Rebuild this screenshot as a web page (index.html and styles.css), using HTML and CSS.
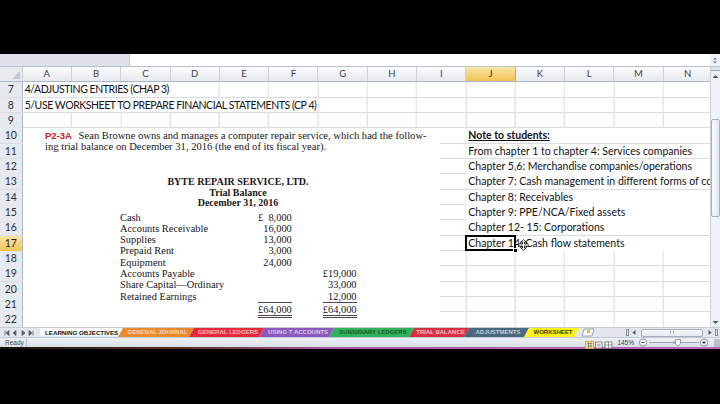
FILE: index.html
```html
<!DOCTYPE html>
<html lang="en">
<head>
    <meta charset="UTF-8">
    <meta name="viewport" content="width=device-width, initial-scale=1.0">
    <title>Trial balance - Excel</title>
    <link rel="stylesheet" href="styles.css">
</head>
<body>
    <div class="excel">
        <div class="formula-bar">
            <div class="name-box"></div>
            <div class="formula-input"></div>
            <div class="formula-arrows">
                <svg width="6" height="9" viewBox="0 0 6 9"><path d="M1 3.5 L3 1.5 L5 3.5Z M1 5.5 L3 7.5 L5 5.5Z" fill="#6d7886"/></svg>
            </div>
        </div>

        <div class="sheet">
            <div class="grid">
                <div class="col-head">
                    <div class="corner"><span class="corner-tri"></span></div>
                    <div>A</div><div>B</div><div>C</div><div>D</div><div>E</div>
                    <div>F</div><div>G</div><div>H</div><div>I</div>
                    <div class="active">J</div>
                    <div>K</div><div>L</div><div>M</div><div>N</div>
                </div>

                <div class="row"><div class="rh">7</div><div class="cell caps to-c">4/ADJUSTING ENTRIES (CHAP 3)</div></div>
                <div class="row"><div class="rh">8</div><div class="cell caps to-f">5/USE WORKSHEET TO PREPARE FINANCIAL STATEMENTS (CP 4)</div></div>
                <div class="row"><div class="rh">9</div></div>
                <div class="row"><div class="rh">10</div><div class="cell note"><b class="note-title">Note to students:</b></div></div>
                <div class="row"><div class="rh">11</div><div class="cell note">From chapter 1 to chapter 4: Services companies</div></div>
                <div class="row"><div class="rh">12</div><div class="cell note">Chapter 5,6: Merchandise companies/operations</div></div>
                <div class="row"><div class="rh">13</div><div class="cell note clip">Chapter 7: Cash management in different forms of co</div></div>
                <div class="row"><div class="rh">14</div><div class="cell note">Chapter 8: Receivables</div></div>
                <div class="row"><div class="rh">15</div><div class="cell note">Chapter 9: PPE/NCA/Fixed assets</div></div>
                <div class="row"><div class="rh">16</div><div class="cell note">Chapter 12- 15: Corporations</div></div>
                <div class="row"><div class="rh active">17</div>
                    <div class="cell note">Chapter 14: Cash flow statements
                        <span class="selection"><span class="fill-handle"></span></span>
                        <svg class="move-cursor" width="11" height="12" viewBox="0 0 11 12">
                            <path d="M5.5 0.5 L8 3 L6.5 3 L6.5 5 L8.5 5 L8.5 3.5 L10.5 6 L8.5 8.5 L8.5 7 L6.5 7 L6.5 9 L8 9 L5.5 11.5 L3 9 L4.5 9 L4.5 7 L2.5 7 L2.5 8.5 L0.5 6 L2.5 3.5 L2.5 5 L4.5 5 L4.5 3 L3 3Z" fill="#fff" stroke="#000" stroke-width="0.8"/>
                        </svg>
                    </div>
                </div>
                <div class="row"><div class="rh">18</div></div>
                <div class="row"><div class="rh">19</div></div>
                <div class="row"><div class="rh">20</div></div>
                <div class="row"><div class="rh">21</div></div>
                <div class="row"><div class="rh">22</div></div>

                <!-- pasted picture of the textbook problem -->
                <div class="picture">
                    <p class="problem"><span class="prob-no">P2-3A</span> Sean Browne owns and manages a computer repair service, which had the follow-<br>ing trial balance on December 31, 2016 (the end of its fiscal year).</p>
                    <div class="tb-title">
                        <div>BYTE REPAIR SERVICE, LTD.</div>
                        <div>Trial Balance</div>
                        <div>December 31, 2016</div>
                    </div>
                    <table class="tb">
                        <tr><td>Cash</td><td class="amt split"><span>£</span><span>8,000</span></td><td></td><td class="amt"></td></tr>
                        <tr><td>Accounts Receivable</td><td class="amt">16,000</td><td></td><td class="amt"></td></tr>
                        <tr><td>Supplies</td><td class="amt">13,000</td><td></td><td class="amt"></td></tr>
                        <tr><td>Prepaid Rent</td><td class="amt">3,000</td><td></td><td class="amt"></td></tr>
                        <tr><td>Equipment</td><td class="amt">24,000</td><td></td><td class="amt"></td></tr>
                        <tr><td>Accounts Payable</td><td class="amt"></td><td></td><td class="amt">£19,000</td></tr>
                        <tr><td>Share Capital—Ordinary</td><td class="amt"></td><td></td><td class="amt">33,000</td></tr>
                        <tr><td>Retained Earnings</td><td class="amt"></td><td></td><td class="amt">12,000</td></tr>
                        <tr class="total"><td></td><td class="amt">£64,000</td><td></td><td class="amt">£64,000</td></tr>
                    </table>
                </div>
            </div>

            <div class="vscroll">
                <div class="split-box"></div>
                <div class="sb-btn"><svg width="7" height="5" viewBox="0 0 7 5"><path d="M0.5 4 L3.5 1 L6.5 4Z" fill="#4d5866"/></svg></div>
                <div class="sb-track"><div class="sb-thumb"></div></div>
                <div class="sb-btn"><svg width="7" height="5" viewBox="0 0 7 5"><path d="M0.5 1 L3.5 4 L6.5 1Z" fill="#4d5866"/></svg></div>
            </div>
        </div>

        <div class="tab-bar">
            <div class="tab-nav">
                <svg width="36" height="6" viewBox="0 0 36 6">
                    <path d="M2 0.5 V5.5 M6 0.5 L3 3 L6 5.5Z M13 0.5 L10 3 L13 5.5Z M19 0.5 L22 3 L19 5.5Z M26 0.5 L29 3 L26 5.5Z M30 0.5 V5.5" fill="#55606d" stroke="#55606d" stroke-width="0.8"/>
                </svg>
            </div>
            <div class="tab active">LEARNING OBJECTIVES</div>
            <div class="tab orange">GENERAL JOURNAL</div>
            <div class="tab red">GENERAL LEDGERS</div>
            <div class="tab purple">USING T ACCOUNTS</div>
            <div class="tab green">SUBSIDIARY LEDGERS</div>
            <div class="tab red2">TRIAL BALANCE</div>
            <div class="tab slate">ADJUSTMENTS</div>
            <div class="tab yellow">WORKSHEET</div>
            <div class="tab-new">
                <svg width="14" height="9" viewBox="0 0 14 9"><path d="M3 1 H13 L11 8 H1Z" fill="#f4f6f9" stroke="#8a96a6" stroke-width="0.8"/><path d="M6 2 h3 v3 h-3z" fill="#e7b94a"/></svg>
            </div>
            <div class="hscroll">
                <span class="hs-split"></span>
                <svg width="6" height="7" viewBox="0 0 6 7"><path d="M4.5 1 L1.5 3.5 L4.5 6Z" fill="#4d5866"/></svg>
                <div class="hs-track"><div class="hs-thumb"><span class="hs-grip"></span></div></div>
                <svg width="6" height="7" viewBox="0 0 6 7"><path d="M1.5 1 L4.5 3.5 L1.5 6Z" fill="#4d5866"/></svg>
                <span class="hs-split"></span>
            </div>
        </div>

        <div class="status-bar">
            <div class="status-text">Ready</div>
            <div class="status-right">
                <div class="views">
                    <svg width="28" height="8" viewBox="0 0 28 8">
                        <rect x="0.5" y="0.5" width="8" height="7" fill="#fbe3a6" stroke="#e0a530"/>
                        <path d="M2 2.5 H7.5 M2 5 H7.5 M3.5 1.5 V7 M6 1.5 V7" stroke="#55606d" stroke-width="0.6"/>
                        <rect x="10.5" y="1" width="6.5" height="6" fill="#fff" stroke="#55606d" stroke-width="0.7"/>
                        <rect x="12" y="2.5" width="3.5" height="3" fill="#aeb8c6"/>
                        <rect x="20" y="1" width="7" height="6" fill="#fff" stroke="#55606d" stroke-width="0.7"/>
                        <path d="M23.5 1 V7 M20 4 H27" stroke="#55606d" stroke-width="0.6"/>
                    </svg>
                </div>
                <div class="zoom-pct">145%</div>
                <svg class="zoom-slider" width="72" height="9" viewBox="0 0 72 9">
                    <circle cx="5" cy="4.5" r="3.6" fill="#f7f8fa" stroke="#6d7886" stroke-width="0.8"/>
                    <path d="M3.3 4.5 H6.7" stroke="#333" stroke-width="0.9"/>
                    <path d="M11 4.5 H61" stroke="#8d98a6" stroke-width="0.8"/>
                    <path d="M36 3 V6" stroke="#8d98a6" stroke-width="0.8"/>
                    <path d="M37.5 1.5 H42.5 V5.5 L40 8 L37.5 5.5Z" fill="#fff" stroke="#6d7886" stroke-width="0.7"/>
                    <circle cx="66" cy="4.5" r="3.6" fill="#f7f8fa" stroke="#6d7886" stroke-width="0.8"/>
                    <path d="M64.3 4.5 H67.7 M66 2.8 V6.2" stroke="#333" stroke-width="0.9"/>
                </svg>
                <div class="grip"></div>
            </div>
        </div>
    </div>
    <div class="taskbar-line"></div>
</body>
</html>
```

FILE: styles.css
```css
* {
    box-sizing: border-box;
}
body {
    margin: 0;
    width: 720px;
    height: 404px;
    overflow: hidden;
    background-color: #000;
    font-family: Lato, "Liberation Sans", sans-serif;
    color: #111;
}
.excel {
    margin-top: 54px;
    height: 293px;
    display: flex;
    flex-direction: column;
    background-color: #fff;
}

/* formula bar strip */
.formula-bar {
    height: 13px;
    display: flex;
    border-bottom: 1px solid #b7c2cf;
}
.name-box {
    width: 130px;
    background-color: #dfe3e9;
    border-right: 1px solid #c3ccd7;
}
.formula-input {
    flex: 1;
}
.formula-arrows {
    width: 10px;
    display: flex;
    align-items: center;
    justify-content: center;
    background-color: #eef1f5;
}

/* sheet */
.sheet {
    height: 260px;
    display: flex;
}
.grid {
    position: relative;
    flex: 1;
    overflow: hidden;
}
.col-head,
.row {
    display: grid;
    grid-template-columns: 22.7px repeat(14, 49.3px);
}
.col-head {
    height: 15.3px;
    background: linear-gradient(#fbfcfd, #e6e9ee);
    border-bottom: 1px solid #a9b7c9;
}
.col-head div {
    border-right: 1px solid #cbd2dc;
    font-size: 9.5px;
    line-height: 14.3px;
    text-align: center;
    color: #3a3f47;
}
.col-head .corner {
    position: relative;
    background-color: #e7ebf0;
}
.corner-tri {
    position: absolute;
    right: 2px;
    bottom: 2px;
    border-left: 8px solid transparent;
    border-bottom: 8px solid #c3cad4;
}
.col-head .active {
    background: linear-gradient(#fbe5a5, #f1c254);
    border-right-color: #d9a53a;
    color: #2b2b2b;
}
.row {
    height: 15.35px;
    border-bottom: 1px solid #dadde2;
    background-image: repeating-linear-gradient(to right, transparent 0 48.3px, #dadde2 48.3px 49.3px);
    background-position: 22.7px 0;
}
.rh {
    grid-column: 1;
    background-color: #e6eaef;
    border-right: 1px solid #a9b7c9;
    font-size: 10.5px;
    line-height: 14.8px;
    text-align: center;
    color: #2a2f36;
}
.rh.active {
    background: linear-gradient(#fbe3a0, #f3c55a);
    color: #222;
}
.cell {
    background-color: #fff;
    white-space: nowrap;
    font-size: 10.5px;
    line-height: 14.8px;
    padding-left: 2px;
}
.caps {
    letter-spacing: -0.45px;
}
.to-c {
    grid-column: 2 / 5;
}
.to-f {
    grid-column: 2 / 8;
}
.note {
    grid-column: 11 / 16;
    position: relative;
}
.note.clip {
    overflow: hidden;
}
.note-title {
    text-decoration: underline;
}
.selection {
    position: absolute;
    left: -1px;
    top: -1px;
    width: 50.3px;
    height: 16.4px;
    border: 2px solid #000;
}
.fill-handle {
    position: absolute;
    right: -4px;
    bottom: -4px;
    width: 5px;
    height: 5px;
    background-color: #000;
    border: 1px solid #fff;
}
.move-cursor {
    position: absolute;
    left: 52px;
    top: 3px;
}

/* picture pasted over the cells */
.picture {
    position: absolute;
    left: 23px;
    top: 61px;
    width: 417px;
    bottom: 0;
    background-color: #fff;
    padding: 3px 0 0 22px;
    font-family: "Liberation Serif", serif;
    color: #1a1617;
}
.problem {
    margin: 0;
    font-size: 10.6px;
    line-height: 10.5px;
}
.prob-no {
    font-family: "Liberation Sans", sans-serif;
    font-weight: bold;
    font-size: 9.5px;
    color: #c8161d;
    margin-right: 4px;
}
.tb-title {
    margin: 25px 9px 0 0;
    text-align: center;
    font-weight: bold;
    font-size: 10px;
    line-height: 10.5px;
}
.tb {
    margin: 3px 0 0 75px;
    border-collapse: collapse;
    font-size: 10.4px;
    line-height: 11.3px;
}
.tb td {
    padding: 0;
    white-space: nowrap;
}
.tb td:nth-child(1) {
    width: 138px;
}
.tb td:nth-child(3) {
    width: 31px;
}
.tb .amt {
    width: 33px;
    text-align: right;
}
.tb .split span:first-child {
    float: left;
}
.tb .total .amt {
    border-top: 1px solid #4a4547;
    border-bottom: 3px double #4a4547;
    padding-top: 1px;
    line-height: 11px;
}

/* vertical scrollbar */
.vscroll {
    width: 10px;
    display: flex;
    flex-direction: column;
    background-color: #eef1f5;
    border-left: 1px solid #c9d1db;
}
.split-box {
    height: 4px;
    border-bottom: 1px solid #9aa6b5;
    background-color: #dfe4ea;
}
.sb-btn {
    height: 10px;
    display: flex;
    align-items: center;
    justify-content: center;
}
.sb-track {
    flex: 1;
}
.sb-thumb {
    margin: 38px 0 0 0;
    height: 98px;
    border: 1px solid #a3afbf;
    border-radius: 2px;
    background: linear-gradient(to right, #f7f9fb, #e3e8ee);
}

/* sheet tabs */
.tab-bar {
    height: 10px;
    display: flex;
    align-items: stretch;
    background-color: #e3e7ed;
    border-top: 1px solid #c3cbd6;
}
.tab-nav {
    width: 40px;
    display: flex;
    align-items: center;
    padding-left: 3px;
}
.tab {
    margin-left: -5px;
    padding: 0 2px 0 5px;
    clip-path: polygon(5px 0, 100% 0, calc(100% - 5px) 100%, 0 100%);
    font-family: "Liberation Sans", sans-serif;
    font-weight: bold;
    font-size: 6px;
    line-height: 9px;
    text-align: center;
    white-space: nowrap;
    overflow: hidden;
    color: rgba(255, 255, 255, 0.7);
}
.tab.active {
    margin-left: 0;
    width: 83px;
    padding: 0 0 0 5px;
    clip-path: none;
    text-align: left;
    font-size: 6.2px;
    background: linear-gradient(#fff 75%, #c7e6f4);
    color: #111;
}
.tab.orange {
    width: 76px;
    background-color: #e98a2f;
}
.tab.red {
    width: 75px;
    background-color: #e5293c;
}
.tab.purple {
    width: 75px;
    background-color: #8c58bd;
}
.tab.green {
    width: 85px;
    background-color: #31b25c;
    color: #145a28;
}
.tab.red2 {
    width: 60px;
    background-color: #d8313f;
}
.tab.slate {
    width: 65px;
    background-color: #48697f;
}
.tab.yellow {
    width: 55px;
    background-color: #fff21a;
    color: #3b3a10;
}
.tab-new {
    width: 20px;
    display: flex;
    align-items: center;
    padding-left: 2px;
}
.hscroll {
    margin-left: auto;
    width: 94px;
    display: flex;
    align-items: center;
    gap: 2px;
    padding-right: 2px;
}
.hs-split {
    width: 3px;
    height: 7px;
    border: 1px solid #7c8898;
    background-color: #fff;
}
.hs-track {
    flex: 1;
    height: 8px;
    padding: 0 2px;
}
.hs-thumb {
    height: 8px;
    display: flex;
    align-items: center;
    justify-content: center;
    border: 1px solid #a3afbf;
    border-radius: 2px;
    background: linear-gradient(#f7f9fb, #e3e8ee);
}
.hs-grip {
    width: 4px;
    height: 3px;
    border-left: 1px solid #9aa6b5;
    border-right: 1px solid #9aa6b5;
}

/* status bar */
.status-bar {
    height: 10px;
    display: flex;
    align-items: center;
    background: linear-gradient(#edf0f4, #d9dfe7);
    border-top: 1px solid #c3cbd6;
}
.status-text {
    width: 27px;
    padding-left: 5px;
    font-family: "Liberation Sans", sans-serif;
    font-size: 6.5px;
    color: #474f5a;
    border-right: 1px solid #b8c1cd;
    height: 100%;
    line-height: 9px;
}
.status-right {
    margin-left: auto;
    display: flex;
    align-items: center;
    gap: 4px;
}
.zoom-pct {
    font-family: "Liberation Sans", sans-serif;
    font-size: 6.5px;
    color: #39414b;
}
.grip {
    width: 6px;
    height: 8px;
    background: radial-gradient(circle, #8d98a6 0.6px, transparent 0.8px) 0 0 / 2px 2px;
}
.taskbar-line {
    height: 2px;
    background: linear-gradient(to right, #1c130b, #5a3420 25%, #a65aa7 45%, #b868b8);
}
```
